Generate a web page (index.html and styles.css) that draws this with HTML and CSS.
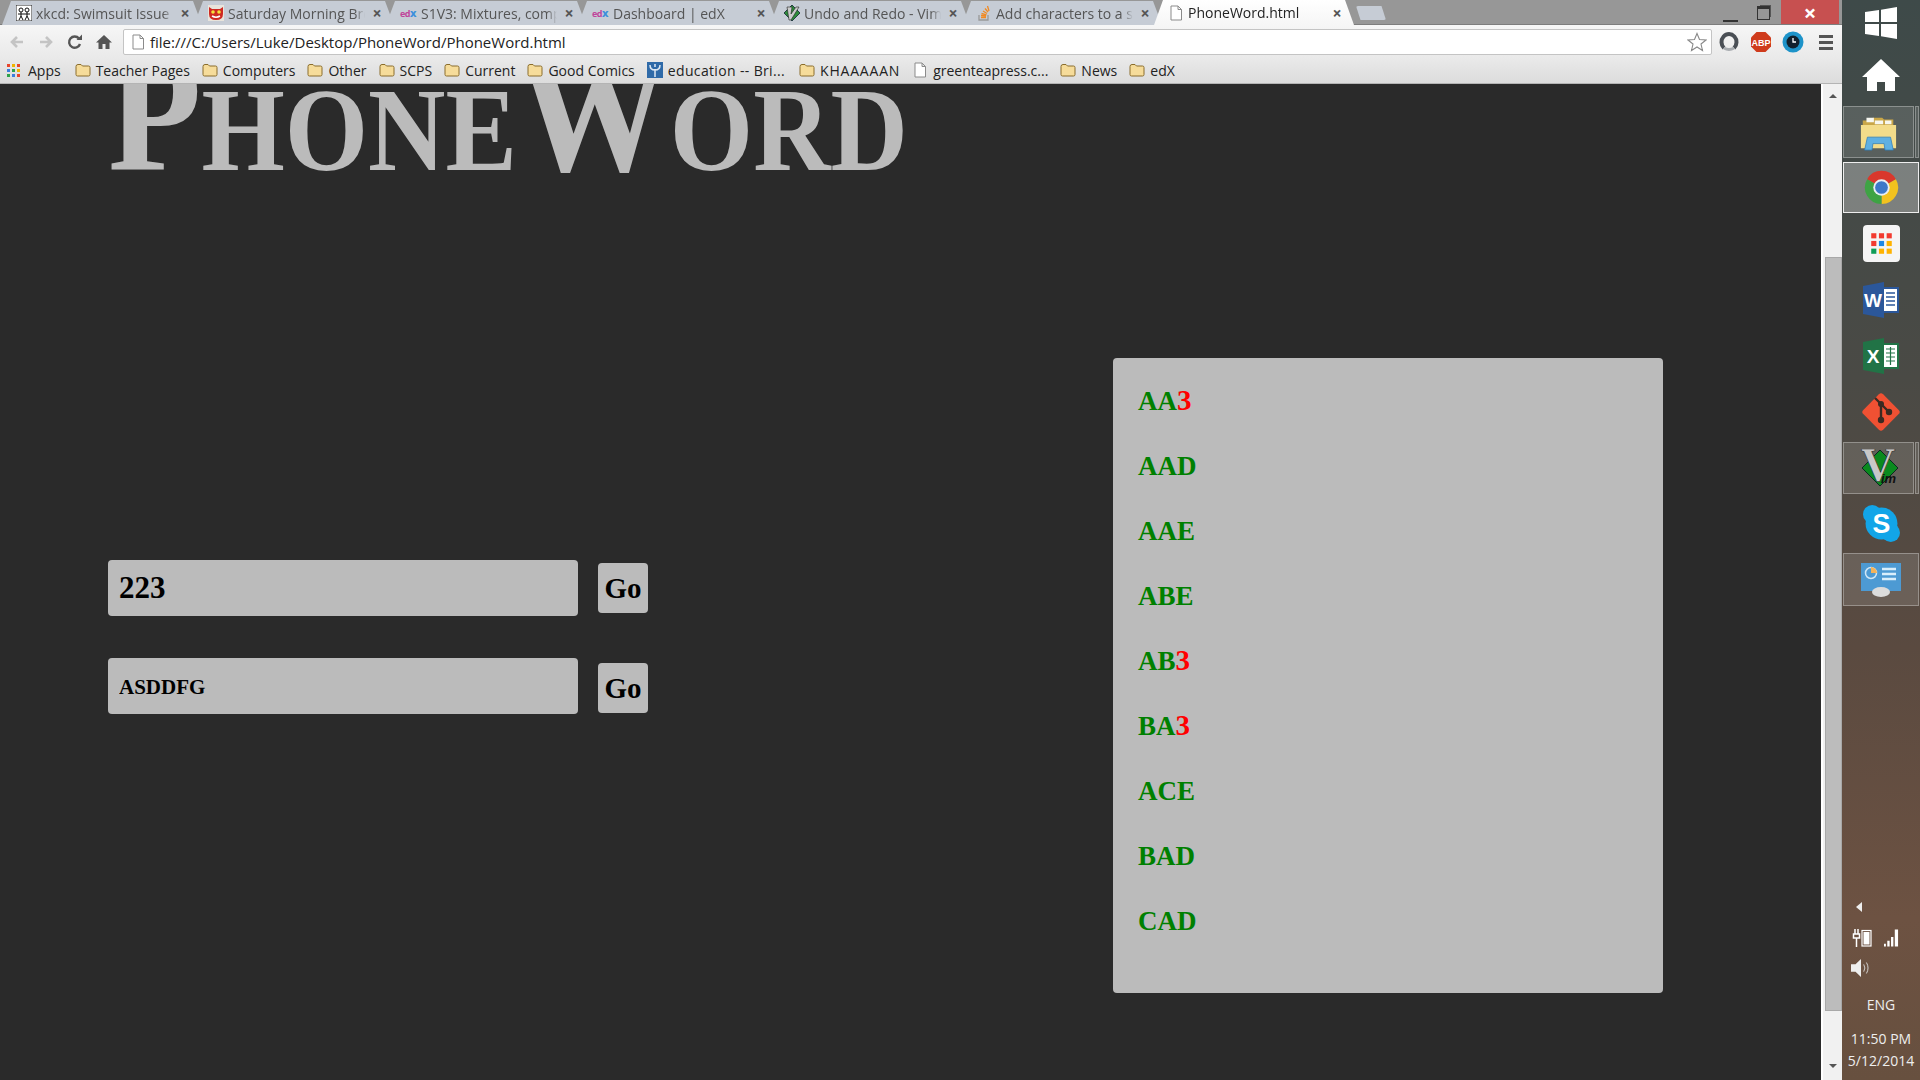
FILE: index.html
```html
<!DOCTYPE html>
<html lang="en">
<head>
  <meta charset="UTF-8" />
  <title>PhoneWord.html</title>
  <link rel="stylesheet" href="styles.css">
</head>
<body>
  <svg class="defs" width="0" height="0">
    <symbol id="folder" viewBox="0 0 16 14">
      <path d="M1 3.5 Q1 1.5 3 1.5 H6 L7.5 3 H13.500 Q15 3 15 4.500 V11.500 Q15 13 13.500 13 H2.500 Q1 13 1 11.500 Z" fill="#f6dc9a" stroke="#8a6d2c" stroke-width="1"/>
    </symbol>
    <symbol id="page" viewBox="0 0 14 16">
      <path d="M2 1 H9 L12.500 4.500 V15 H2 Z M9 1 V4.500 H12.500" fill="#fff" stroke="#8b8b8b" stroke-width="1"/>
    </symbol>
  </svg>

  <div class="browser">
    <div class="tabstrip">
      <div class="tab">
        <svg class="favicon" viewBox="0 0 16 16"><rect width="16" height="16" fill="#fff" stroke="#222"/><circle cx="5" cy="5" r="2" fill="none" stroke="#111"/><circle cx="11" cy="5" r="2" fill="none" stroke="#111"/><path d="M5 7 V11 L3 15 M5 11 L7 15 M11 7 V11 L9 15 M11 11 L13 15 M2 9 H8 M8 9 H14" stroke="#111" fill="none"/></svg>
        <span class="tab-label">xkcd: Swimsuit Issue</span>
        <span class="tab-close">×</span>
      </div>
      <div class="tab">
        <svg class="favicon" viewBox="0 0 16 16"><rect width="16" height="16" fill="#e8e4dc"/><path d="M1 2 L4 4 H12 L15 2 V9 Q15 15 8 15 Q1 15 1 9 Z" fill="#cf2a22"/><circle cx="5" cy="7" r="1.800" fill="#f3e23c"/><circle cx="11" cy="7" r="1.800" fill="#f3e23c"/><path d="M4 11 Q8 13.500 12 11" stroke="#fff" stroke-width="1.500" fill="none"/></svg>
        <span class="tab-label">Saturday Morning Breakfast Cereal</span>
        <span class="tab-close">×</span>
      </div>
      <div class="tab">
        <span class="edx-icon">ed<b>X</b></span>
        <span class="tab-label">S1V3: Mixtures, compounds</span>
        <span class="tab-close">×</span>
      </div>
      <div class="tab">
        <span class="edx-icon">ed<b>X</b></span>
        <span class="tab-label">Dashboard | edX</span>
        <span class="tab-close">×</span>
      </div>
      <div class="tab">
        <svg class="favicon" viewBox="0 0 16 16"><path d="M8 0 L16 8 L8 16 L0 8 Z" fill="#2e8b3a" stroke="#123" stroke-width=".8"/><path d="M3 2 H8 L7 9 L12 2 H15 L7 15 H5 Z" fill="#ccc" stroke="#222" stroke-width=".6"/></svg>
        <span class="tab-label">Undo and Redo - Vim Tips</span>
        <span class="tab-close">×</span>
      </div>
      <div class="tab">
        <svg class="favicon" viewBox="0 0 16 16"><path d="M3 10 V15 H12 V10" fill="none" stroke="#999" stroke-width="1.300"/><path d="M5 12.500 H10 M5 10.500 L10 11 M5.500 8.500 L10.500 9.800 M7 6 L11 8.500 M9 3.500 L12 7 M11.500 1 L13 6" stroke="#f08a24" stroke-width="1.300"/></svg>
        <span class="tab-label">Add characters to a string</span>
        <span class="tab-close">×</span>
      </div>
      <div class="tab tab-active">
        <svg class="favicon"><use href="#page"/></svg>
        <span class="tab-label">PhoneWord.html</span>
        <span class="tab-close">×</span>
      </div>
      <div class="new-tab"></div>
      <div class="window-controls">
        <span class="win-min"></span>
        <span class="win-restore"></span>
        <span class="win-close">×</span>
      </div>
    </div>

    <div class="toolbar">
      <svg class="nav-icon" viewBox="0 0 18 18"><path d="M15 9 H5 M9 4 L4 9 L9 14" fill="none" stroke="#c4c4c4" stroke-width="2.600"/></svg>
      <svg class="nav-icon" viewBox="0 0 18 18"><path d="M3 9 H13 M9 4 L14 9 L9 14" fill="none" stroke="#c4c4c4" stroke-width="2.600"/></svg>
      <svg class="nav-icon" viewBox="0 0 18 18"><path d="M14 11 A5.600 5.600 0 1 1 13 5.500" fill="none" stroke="#555" stroke-width="2.400"/><path d="M10.500 7 H16 V1.500 Z" fill="#555"/></svg>
      <svg class="nav-icon" viewBox="0 0 18 18"><path d="M9 2 L17 9.500 H14.500 V16 H10.500 V11 H7.500 V16 H3.500 V9.500 H1 Z" fill="#555"/></svg>
      <div class="address">
        <svg class="address-page"><use href="#page"/></svg>
        <span>file:///C:/Users/Luke/Desktop/PhoneWord/PhoneWord.html</span>
        <svg class="star" viewBox="0 0 20 20"><path d="M10 1.500 L12.500 7.500 L19 8 L14 12 L15.500 18.500 L10 15 L4.500 18.500 L6 12 L1 8 L7.500 7.500 Z" fill="#fff" stroke="#888" stroke-width="1.100"/></svg>
      </div>
      <div class="extensions">
        <svg class="ext-icon" viewBox="0 0 24 24"><path d="M7 18 A7.500 8 0 1 1 17 18" fill="none" stroke="#4a4f55" stroke-width="4"/><path d="M7 18 Q12 21 17 18" fill="none" stroke="#a8acb0" stroke-width="3"/></svg>
        <svg class="ext-icon" viewBox="0 0 24 24"><path d="M7.500 2 H16.500 L22 7.500 V16.500 L16.500 22 H7.500 L2 16.500 V7.500 Z" fill="#cf3b1c"/><text x="12" y="15.500" class="abp-text">ABP</text></svg>
        <svg class="ext-icon" viewBox="0 0 24 24"><circle cx="12" cy="12" r="10.500" fill="#1d93c9"/><circle cx="12" cy="12" r="6.500" fill="#11202c"/><path d="M12 8 V12 H15" stroke="#fff" stroke-width="1.300" fill="none"/></svg>
        <div class="menu-icon"><span></span><span></span><span></span></div>
      </div>
    </div>

    <div class="bookmarks">
      <div class="bookmark bookmark-apps">
        <svg class="apps-grid" viewBox="0 0 13 13">
          <rect width="3" height="3" fill="#e8452c"/><rect x="5" width="3" height="3" fill="#f0b400"/><rect x="10" width="3" height="3" fill="#e8452c"/>
          <rect y="5" width="3" height="3" fill="#3b7ddd"/><rect x="5" y="5" width="3" height="3" fill="#2ea24a"/><rect x="10" y="5" width="3" height="3" fill="#f0b400"/>
          <rect y="10" width="3" height="3" fill="#2ea24a"/><rect x="5" y="10" width="3" height="3" fill="#3b7ddd"/><rect x="10" y="10" width="3" height="3" fill="#e8452c"/>
        </svg>
        <span>Apps</span>
      </div>
      <div class="bookmark"><svg class="bm-icon"><use href="#folder"/></svg><span>Teacher Pages</span></div>
      <div class="bookmark"><svg class="bm-icon"><use href="#folder"/></svg><span>Computers</span></div>
      <div class="bookmark"><svg class="bm-icon"><use href="#folder"/></svg><span>Other</span></div>
      <div class="bookmark"><svg class="bm-icon"><use href="#folder"/></svg><span>SCPS</span></div>
      <div class="bookmark"><svg class="bm-icon"><use href="#folder"/></svg><span>Current</span></div>
      <div class="bookmark"><svg class="bm-icon"><use href="#folder"/></svg><span>Good Comics</span></div>
      <div class="bookmark bookmark-wide">
        <svg class="bm-icon" viewBox="0 0 16 16"><rect width="16" height="16" fill="#2f6aa8"/><path d="M8 15 V7 M8 8 Q3 8 3 3 M8 8 Q13 8 13 3 M8 5 V2" stroke="#dfe9f3" stroke-width="1.500" fill="none"/></svg>
        <span>education -- Bri...</span>
      </div>
      <div class="bookmark bookmark-caps"><svg class="bm-icon"><use href="#folder"/></svg><span>KHAAAAAN</span></div>
      <div class="bookmark"><svg class="bm-icon"><use href="#page"/></svg><span>greenteapress.c...</span></div>
      <div class="bookmark"><svg class="bm-icon"><use href="#folder"/></svg><span>News</span></div>
      <div class="bookmark"><svg class="bm-icon"><use href="#folder"/></svg><span>edX</span></div>
    </div>

    <div class="viewport">
      <main class="page">
        <h1 class="title">PhoneWord</h1>
        <div class="columns">
          <section class="forms">
            <form class="entry">
              <input type="text" class="number-input" value="223" />
              <button type="button" class="go-btn">Go</button>
            </form>
            <form class="entry entry-word">
              <input type="text" class="word-input" value="ASDDFG" />
              <button type="button" class="go-btn">Go</button>
            </form>
          </section>
          <ul class="results">
            <li>AA<span class="digit">3</span></li>
            <li>AAD</li>
            <li>AAE</li>
            <li>ABE</li>
            <li>AB<span class="digit">3</span></li>
            <li>BA<span class="digit">3</span></li>
            <li>ACE</li>
            <li>BAD</li>
            <li>CAD</li>
          </ul>
        </div>
      </main>
      <div class="scrollbar">
        <span class="arrow-up"></span>
        <div class="thumb"></div>
        <span class="arrow-down"></span>
      </div>
    </div>
  </div>

  <aside class="taskbar">
    <svg class="tb-windows" viewBox="0 0 32 32"><path d="M0 5 L14 3 V15 H0 Z M16 2.700 L32 0 V15 H16 Z M0 17 H14 V29 L0 27 Z M16 17 H32 V32 L16 29.300 Z" fill="#fff"/></svg>
    <svg class="tb-home" viewBox="0 0 38 32"><path d="M19 0 L38 18 H33 V32 H23 V23 H15 V32 H5 V18 H0 Z" fill="#fff"/></svg>

    <div class="tile-group tile-explorer">
      <div class="tile">
        <svg class="tb-icon" viewBox="0 0 40 38">
          <path d="M3 6 H12 L14 3 H24 L26 5 H36 V14 H3 Z" fill="#c9a648"/>
          <path d="M7 3 H15 V8 H7 Z M16 6 H25 V10 H16 Z M27 6 H34 V10 H27 Z" fill="#f7f7f0"/>
          <path d="M1 11 H39 V36 H1 Z" fill="#f3dc8a"/>
          <path d="M5 38 L8 24 H33 L36 38 H27 L26 31 H14 L13 38 Z" fill="#5fb0e2" stroke="#2d7db8" stroke-width=".8"/>
        </svg>
      </div>
      <span class="sliver"></span>
    </div>
    <div class="tile tile-chrome">
      <svg class="tb-icon" viewBox="0 0 36 36">
        <path d="M18 18 L4 10 A16 16 0 0 1 32 10 Z" fill="#d9382c"/>
        <path d="M18 18 L32 10 A16 16 0 0 1 18 34 Z" fill="#f2c21f"/>
        <path d="M18 18 L18 34 A16 16 0 0 1 4 10 Z" fill="#3ea344"/>
        <circle cx="18" cy="18" r="8" fill="#e8eef4"/>
        <circle cx="18" cy="18" r="6.200" fill="#3c78c8"/>
      </svg>
    </div>
    <div class="apps-tile">
      <svg viewBox="0 0 36 36" class="tb-icon">
        <rect x="0" y="0" width="36" height="36" rx="4" fill="#f5f5f5"/>
        <rect x="8" y="8" width="5" height="5" fill="#f23b30"/><rect x="15.500" y="8" width="5" height="5" fill="#f23b30"/><rect x="23" y="8" width="5" height="5" fill="#f23b30"/>
        <rect x="8" y="15.500" width="5" height="5" fill="#f23b30"/><rect x="15.500" y="15.500" width="5" height="5" fill="#1e88e5"/><rect x="23" y="15.500" width="5" height="5" fill="#ffb300"/>
        <rect x="8" y="23" width="5" height="5" fill="#0f9d58"/><rect x="15.500" y="23" width="5" height="5" fill="#ffb300"/><rect x="23" y="23" width="5" height="5" fill="#ffb300"/>
      </svg>
    </div>
    <svg class="tb-office" viewBox="0 0 36 36">
      <path d="M0 4 L21 0 V36 L0 32 Z" fill="#2b579a"/>
      <rect x="21" y="5" width="15" height="26" fill="#2b579a"/>
      <rect x="21" y="7" width="13" height="22" fill="#fff"/>
      <path d="M23 11 H32 M23 15 H32 M23 19 H32 M23 23 H32" stroke="#2b579a" stroke-width="1.500"/>
      <text x="10" y="25" class="office-letter">W</text>
    </svg>
    <svg class="tb-office" viewBox="0 0 36 36">
      <path d="M0 4 L21 0 V36 L0 32 Z" fill="#217346"/>
      <rect x="21" y="5" width="15" height="26" fill="#217346"/>
      <rect x="21" y="7" width="13" height="22" fill="#fff"/>
      <path d="M23 11 H32 M23 15 H32 M23 19 H32 M23 23 H32 M27.500 9 V27" stroke="#217346" stroke-width="1.200"/>
      <text x="10" y="25" class="office-letter">X</text>
    </svg>
    <svg class="tb-git" viewBox="0 0 40 40">
      <rect x="6" y="6" width="28" height="28" rx="3" transform="rotate(45 20 20)" fill="#f05133"/>
      <path d="M14 6 L20 12 M20 12 V28 M20 12 L28 20" stroke="#3a2a22" stroke-width="2.400" fill="none"/>
      <circle cx="20" cy="12" r="3" fill="#3a2a22"/><circle cx="20" cy="28" r="3.200" fill="#3a2a22"/><circle cx="28" cy="20" r="3.200" fill="#3a2a22"/>
    </svg>
    <div class="tile-group tile-vim">
      <div class="tile">
        <svg class="tb-icon tb-vim" viewBox="0 0 40 38">
          <path d="M21 1 L39 19 L21 37 L3 19 Z" fill="#0a8a1e" stroke="#0b2a20" stroke-width="1"/>
          <text x="19" y="32" class="vim-v">V</text>
          <text x="22" y="34" class="vim-im">im</text>
        </svg>
      </div>
      <span class="sliver"></span>
    </div>
    <svg class="tb-skype" viewBox="0 0 36 36">
      <circle cx="9" cy="9" r="9" fill="#12a5e8"/><circle cx="27" cy="27" r="9" fill="#12a5e8"/><circle cx="18" cy="18" r="15.500" fill="#12a5e8"/>
      <text x="18" y="27" class="skype-letter">S</text>
    </svg>
    <div class="tile tile-control">
      <svg class="tb-icon tb-control" viewBox="0 0 40 34">
        <rect y="0" width="40" height="28" fill="#4d9ad3"/>
        <circle cx="10" cy="10" r="5.500" fill="none" stroke="#cfe6f6" stroke-width="1.500"/>
        <path d="M10 4 A6 6 0 0 1 16 10 H10 Z" fill="#f4b35a"/>
        <path d="M21 6 H35 M21 11 H35 M21 16 H35" stroke="#d9eefb" stroke-width="2.600"/>
        <ellipse cx="20" cy="29" rx="9" ry="5" fill="#dcdcdc"/>
      </svg>
    </div>

    <div class="tray">
      <span class="tray-arrow"></span>
      <div class="tray-row">
        <svg class="tray-power" viewBox="0 0 20 18"><path d="M3 0 V5 M6 0 V5 M1.500 5 H7.500 V9 H1.500 Z M4.500 9 V18" stroke="#fff" stroke-width="1.500" fill="none"/><rect x="10" y="1.500" width="9" height="15.500" fill="none" stroke="#fff" stroke-width="1.200"/><rect x="11.500" y="3" width="6" height="12.500" fill="#fff"/></svg>
        <svg class="tray-signal" viewBox="0 0 16 18"><path d="M0 15 H2 V18 H0 Z M3.500 12 H6 V18 H3.500 Z M7.500 8 H10 V18 H7.500 Z M11.500 0 H15 V18 H11.500 Z" fill="#fff"/></svg>
      </div>
      <svg class="tray-volume" viewBox="0 0 22 20"><path d="M0 6 H5 L11 0 V20 L5 14 H0 Z" fill="#eee"/><path d="M14 6 Q16.500 10 14 14 M17 4 Q20.500 10 17 16" stroke="#ddd" fill="none"/></svg>
      <span class="tray-lang">ENG</span>
      <span class="tray-time">11:50 PM</span>
      <span class="tray-date">5/12/2014</span>
    </div>
  </aside>
</body>
</html>
```

FILE: styles.css
```css
* {
  box-sizing: border-box;
}

html, body {
  margin: 0;
  height: 100%;
}

body {
  display: flex;
  width: 1920px;
  height: 1080px;
  overflow: hidden;
  font-family: "Open Sans", "Noto Sans", sans-serif;
}

.defs {
  position: absolute;
}

.browser {
  width: 1842px;
  display: flex;
  flex-direction: column;
}

/* tab strip */
.tabstrip {
  height: 25px;
  background: #979797;
  display: flex;
  align-items: flex-end;
  padding-left: 2px;
  border-bottom: 1px solid #7d7d7d;
}

.tab {
  width: 200px;
  height: 24px;
  margin-right: -8px;
  margin-bottom: -1px;
  padding: 0 9px 0 14px;
  display: flex;
  align-items: center;
  gap: 4px;
  background: #c6ccd5;
  color: #555;
  font-size: 14px;
  clip-path: polygon(0 100%, 9px 0, calc(100% - 9px) 0, 100% 100%);
}

.tab-active {
  background: linear-gradient(#fff, #f6f6f6);
  color: #222;
  height: 25px;
}

.favicon {
  width: 16px;
  height: 16px;
  flex: none;
}

.edx-icon {
  width: 17px;
  flex: none;
  font-size: 9px;
  font-weight: 700;
  letter-spacing: -0.5px;
  color: #c0459a;
}

.edx-icon b {
  color: #3a8fdc;
}

.tab-label {
  flex: 1;
  white-space: nowrap;
  overflow: hidden;
  -webkit-mask-image: linear-gradient(to right, #000 calc(100% - 10px), transparent);
  mask-image: linear-gradient(to right, #000 calc(100% - 10px), transparent);
}

.tab-close {
  width: 16px;
  flex: none;
  text-align: center;
  font-size: 16px;
  font-weight: 700;
  color: #555;
}

.new-tab {
  width: 30px;
  height: 14px;
  margin: 0 0 4px 10px;
  background: #c6ccd5;
  border-radius: 2px;
  clip-path: polygon(0 0, 85% 0, 100% 100%, 15% 100%);
}

.window-controls {
  margin-left: auto;
  height: 24px;
  align-self: flex-start;
  display: flex;
  align-items: flex-start;
  padding-right: 3px;
}

.win-min {
  width: 15px;
  height: 2px;
  margin: 20px 19px 0 0;
  background: #333;
}

.win-restore {
  width: 13px;
  height: 14px;
  margin: 6px 11px 0 0;
  border: 1.500px solid #333;
  border-top-width: 3px;
  box-shadow: 2px -2px 0 -1px #555;
}

.win-close {
  width: 58px;
  height: 24px;
  background: #c75050;
  color: #fff;
  text-align: center;
  font-size: 22px;
  line-height: 24px;
  font-weight: 700;
}

/* toolbar */
.toolbar {
  height: 32px;
  padding: 2px 0 0 8px;
  background: linear-gradient(#f6f6f6, #eaeaea);
  display: flex;
  align-items: center;
}

.nav-icon {
  width: 18px;
  height: 18px;
  margin-right: 11px;
  flex: none;
}

.address {
  width: 1589px;
  height: 26px;
  margin-left: -1px;
  background: #fff;
  border: 1px solid #c4c4c4;
  border-radius: 2px;
  display: flex;
  align-items: center;
  padding: 0 4px 0 7px;
  gap: 5px;
  font-size: 15px;
  color: #222;
}

.address-page {
  width: 14px;
  height: 16px;
}

.star {
  width: 20px;
  height: 20px;
  margin-left: auto;
}

.extensions {
  display: flex;
  align-items: center;
  gap: 8px;
  margin-left: 5px;
}

.ext-icon {
  width: 24px;
  height: 24px;
}

.abp-text {
  font-family: "Liberation Sans", sans-serif;
  font-size: 9px;
  font-weight: 700;
  fill: #fff;
  text-anchor: middle;
}

.menu-icon {
  width: 14px;
  margin-left: 6px;
  display: flex;
  flex-direction: column;
  gap: 3px;
}

.menu-icon span {
  height: 3px;
  background: #555;
}

/* bookmarks */
.bookmarks {
  height: 27px;
  background: linear-gradient(#eaeaea, #dcdcdc);
  border-bottom: 1px solid #b4b4b4;
  display: flex;
  align-items: center;
  padding-left: 7px;
  gap: 12px;
  font-size: 14px;
  color: #222;
}

.bookmark {
  display: flex;
  align-items: center;
  gap: 5px;
  white-space: nowrap;
}

.bookmark-apps {
  gap: 8px;
  margin-right: 2px;
}

.bookmark-wide {
  letter-spacing: 0.35px;
}

.bookmark-caps {
  letter-spacing: 0.8px;
  margin-left: 2px;
}

.apps-grid {
  width: 13px;
  height: 13px;
}

.bm-icon {
  width: 16px;
  height: 16px;
}

/* page */
.viewport {
  flex: 1;
  display: flex;
  min-height: 0;
}

.page {
  flex: 1;
  background: #2a2a2a;
  overflow: hidden;
  padding-left: 108px;
}

.title {
  height: 274px;
  margin: 0;
  font-family: "Liberation Serif", serif;
  font-size: 170px;
  font-weight: 700;
  font-variant: small-caps;
  line-height: 58px;
  color: #bbb;
  white-space: nowrap;
  transform: scaleX(0.9);
  transform-origin: left;
}

.columns {
  display: flex;
  align-items: flex-start;
}

.forms {
  width: 1005px;
  padding-top: 202px;
  display: flex;
  flex-direction: column;
  gap: 42px;
}

.entry {
  display: flex;
  align-items: center;
  gap: 20px;
  margin: 0;
}

.entry input {
  width: 470px;
  height: 56px;
  padding: 0 11px;
  background: #bbb;
  border: none;
  border-radius: 4px;
  font-family: "Liberation Serif", serif;
  font-weight: 700;
  color: #000;
}

.number-input {
  font-size: 31px;
}

.entry .word-input {
  font-size: 21px;
  padding-top: 3px;
}

.entry-word .go-btn {
  margin-top: 4px;
}

.go-btn {
  width: 50px;
  height: 50px;
  padding: 0;
  background: #bbb;
  border: none;
  border-radius: 4px;
  font-family: "Liberation Serif", serif;
  font-size: 29px;
  font-weight: 700;
  color: #000;
}

.results {
  width: 550px;
  height: 635px;
  margin: 0;
  padding: 11px 0 0 25px;
  list-style: none;
  background: #bbb;
  border-radius: 4px;
  font-family: "Liberation Serif", serif;
  font-size: 27px;
  font-weight: 700;
  line-height: 65px;
  color: #008000;
}

.digit {
  font-size: 29px;
  line-height: 1;
  color: #f00;
}

.scrollbar {
  width: 21px;
  padding: 0 2px 0 3px;
  background: #f1f1f1;
  border-left: 2px solid #fff;
  display: flex;
  flex-direction: column;
  align-items: center;
}

.arrow-up {
  margin-top: 10px;
  border: 4px solid transparent;
  border-top: none;
  border-bottom: 4px solid #555;
}

.thumb {
  width: 17px;
  height: 754px;
  margin-top: 159px;
  background: #bcbcbc;
  border: 1px solid #a8a8a8;
}

.arrow-down {
  margin-top: 53px;
  border: 4px solid transparent;
  border-bottom: none;
  border-top: 4px solid #555;
}

/* taskbar */
.taskbar {
  width: 78px;
  background: linear-gradient(#3e4a49, #4a4a45 35%, #5a4a40 60%, #6d5242 85%, #67503f);
  display: flex;
  flex-direction: column;
  align-items: center;
  color: #eee;
  padding-top: 7px;
}

.tb-windows {
  width: 32px;
  height: 32px;
}

.tb-home {
  width: 38px;
  height: 32px;
  margin-top: 20px;
}

.tile-group {
  width: 76px;
  display: flex;
  justify-content: space-between;
}

.tile {
  width: 71px;
  height: 52px;
  background: rgba(255, 255, 255, 0.12);
  border: 1px solid rgba(255, 255, 255, 0.3);
  display: flex;
  align-items: center;
  justify-content: center;
}

.sliver {
  width: 4px;
  height: 52px;
  background: rgba(255, 255, 255, 0.12);
  border: 1px solid rgba(255, 255, 255, 0.3);
}

.tile-explorer {
  margin-top: 15px;
}

.tile-chrome {
  width: 76px;
  height: 51px;
  margin-top: 4px;
  background: rgba(255, 255, 255, 0.3);
  border: 1px solid #eee;
}

.tb-icon {
  width: 37px;
  height: 37px;
}

.tb-vim {
  width: 40px;
  height: 38px;
}

.apps-tile {
  width: 37px;
  height: 37px;
  margin-top: 12px;
}

.tb-office {
  width: 36px;
  height: 36px;
  margin-top: 20px;
}

.office-letter {
  font-family: "Liberation Sans", sans-serif;
  font-size: 19px;
  font-weight: 700;
  fill: #fff;
  text-anchor: middle;
}

.tb-git {
  width: 40px;
  height: 40px;
  margin-top: 18px;
}

.tile-vim {
  margin-top: 10px;
}

.vim-v {
  font-family: "Liberation Serif", serif;
  font-size: 48px;
  font-weight: 700;
  fill: #c8c8c8;
  stroke: #222;
  stroke-width: 0.6;
  text-anchor: middle;
}

.vim-im {
  font-family: "Liberation Sans", sans-serif;
  font-size: 13px;
  font-style: italic;
  font-weight: 700;
  fill: #111;
}

.tb-skype {
  width: 37px;
  height: 37px;
  margin-top: 11px;
}

.skype-letter {
  font-family: "Liberation Sans", sans-serif;
  font-size: 26px;
  font-weight: 700;
  fill: #fff;
  text-anchor: middle;
}

.tile-control {
  width: 76px;
  height: 53px;
  margin-top: 11px;
}

.tb-control {
  width: 40px;
  height: 34px;
}

.tray {
  margin-top: 296px;
  width: 100%;
  display: flex;
  flex-direction: column;
  align-items: center;
  font-size: 14px;
}

.tray-arrow {
  align-self: flex-start;
  margin-left: 14px;
  border: 5px solid transparent;
  border-left: none;
  border-right: 6px solid #eee;
}

.tray-row {
  display: flex;
  gap: 12px;
  margin-top: 17px;
  align-self: flex-start;
  margin-left: 10px;
}

.tray-power {
  width: 20px;
  height: 18px;
}

.tray-signal {
  width: 15px;
  height: 18px;
}

.tray-volume {
  align-self: flex-start;
  margin: 11px 0 0 9px;
  width: 20px;
  height: 20px;
}

.tray-lang {
  margin-top: 17px;
}

.tray-time {
  margin-top: 15px;
}

.tray-date {
  margin-top: 3px;
}
```
